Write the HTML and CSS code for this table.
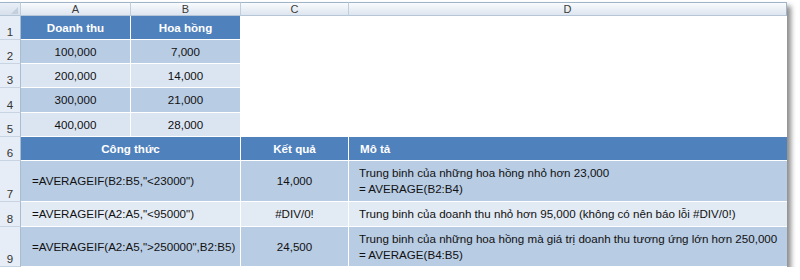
FILE: index.html
```html
<!DOCTYPE html>
<html lang="vi">
<head>
<meta charset="utf-8">
<link rel="stylesheet" href="styles.css">
</head>
<body>
<div class="sheet">
  <div class="ch corner"><span class="tri"></span></div>
  <div class="ch">A</div>
  <div class="ch">B</div>
  <div class="ch">C</div>
  <div class="ch last">D</div>

  <div class="rh">1</div>
  <div class="cell hd">Doanh thu</div>
  <div class="cell hd">Hoa hồng</div>
  <div class="blank"></div>

  <div class="rh">2</div>
  <div class="cell dk c">100,000</div>
  <div class="cell dk c">7,000</div>
  <div class="blank"></div>

  <div class="rh">3</div>
  <div class="cell lt c">200,000</div>
  <div class="cell lt c">14,000</div>
  <div class="blank"></div>

  <div class="rh">4</div>
  <div class="cell dk c">300,000</div>
  <div class="cell dk c">21,000</div>
  <div class="blank"></div>

  <div class="rh">5</div>
  <div class="cell lt c">400,000</div>
  <div class="cell lt c">28,000</div>
  <div class="blank"></div>

  <div class="rh">6</div>
  <div class="cell hd span2">Công thức</div>
  <div class="cell hd">Kết quả</div>
  <div class="cell hd left last">Mô tả</div>

  <div class="rh">7</div>
  <div class="cell dk span2 f">=AVERAGEIF(B2:B5,"&lt;23000")</div>
  <div class="cell dk c">14,000</div>
  <div class="cell dk desc last">Trung binh của những hoa hồng nhỏ hơn 23,000<br>= AVERAGE(B2:B4)</div>

  <div class="rh">8</div>
  <div class="cell lt8 span2 f">=AVERAGEIF(A2:A5,"&lt;95000")</div>
  <div class="cell lt8 c">#DIV/0!</div>
  <div class="cell lt8 desc last">Trung binh của doanh thu nhỏ hơn 95,000 (không có nên báo lỗi #DIV/0!)</div>

  <div class="rh">9</div>
  <div class="cell dk span2 f">=AVERAGEIF(A2:A5,"&gt;250000",B2:B5)</div>
  <div class="cell dk c">24,500</div>
  <div class="cell dk desc last">Trung binh của những hoa hồng mà giá trị doanh thu tương ứng lớn hơn 250,000<br>= AVERAGE(B4:B5)</div>
</div>
</body>
</html>
```

FILE: styles.css
```css
html, body {
  margin: 0;
  padding: 0;
  background: #ffffff;
}

.sheet {
  margin-top: 2px;
  width: 787px;
  display: grid;
  grid-template-columns: 21px 110px 110px 108px 1fr;
  grid-template-rows: 14px 24px 24px 24px 25px 24px 24px 41px 25px 40px;
  font-family: "Liberation Sans", Arial, sans-serif;
  font-size: 11.6px;
  color: #111;
  background: #ffffff;
  box-shadow: 4px 4px 5px rgba(0, 0, 0, 0.45);
}

.ch {
  box-sizing: border-box;
  border-top: 1px solid #9fb3c9;
  border-right: 1px solid #c0cddc;
  border-bottom: 1px solid #b6c6d9;
  background: linear-gradient(#f9fbfd, #dde5ef);
  font-size: 11px;
  color: #3a3a3a;
  display: flex;
  align-items: center;
  justify-content: center;
  line-height: 1;
}

.ch.last {
  border-right: 1px solid #9fb3c9;
}

.corner {
  position: relative;
  background: linear-gradient(#e9eff7, #d7e0eb);
}

.tri {
  position: absolute;
  right: 2px;
  bottom: 1px;
  width: 0;
  height: 0;
  border-left: 7px solid transparent;
  border-bottom: 7px solid #c3cfdd;
}

.rh {
  box-sizing: border-box;
  background: #e6edf6;
  border-right: 1px solid #a9bcd2;
  border-bottom: 1px solid #c8d4e2;
  font-size: 11.5px;
  color: #333;
  display: flex;
  align-items: flex-end;
  justify-content: center;
  padding-bottom: 1px;
  line-height: 1;
}

.blank {
  grid-column: span 2;
  background: #ffffff;
}

.cell {
  box-sizing: border-box;
  border-right: 1px solid #ffffff;
  border-bottom: 1px solid #ffffff;
  display: flex;
  align-items: center;
  line-height: 16px;
  white-space: nowrap;
}

.cell.last {
  border-right: none;
}

.span2 {
  grid-column: span 2;
}

.hd {
  background: #4f81bd;
  color: #ffffff;
  font-weight: bold;
  justify-content: center;
}

.hd.left {
  justify-content: flex-start;
  padding-left: 11px;
}

.dk {
  background: #b8cce4;
}

.lt {
  background: #dbe5f1;
}

.lt8 {
  background: #e2eaf4;
}

.c {
  justify-content: center;
}

.f {
  padding-left: 11px;
}

.desc {
  padding-left: 10px;
}
```
